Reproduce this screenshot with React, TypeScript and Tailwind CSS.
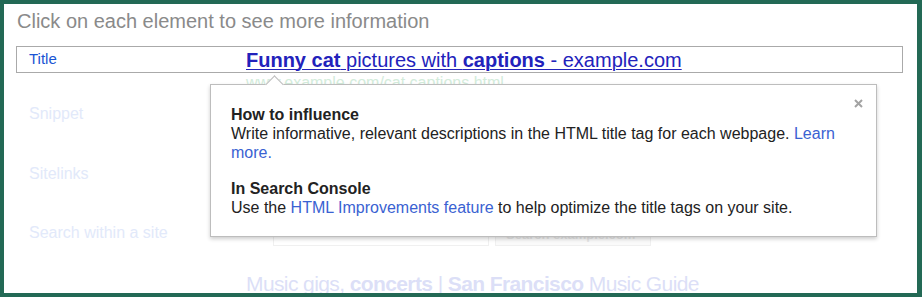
import React from 'react';

const LABELS = [
  { text: 'Snippet', top: 'mt-[31px]' },
  { text: 'Sitelinks', top: 'mt-[41px]' },
  { text: 'Search within a site', top: 'mt-[40px]' },
];

export default function App() {
  return (
    <div
      className="w-[922px] h-[297px] overflow-hidden border-t-4 border-l-4 border-b-4 border-r-[5px] border-[#236955] bg-white"
      style={{ fontFamily: '"Liberation Sans", Arial, sans-serif' }}
    >
      <div className="relative h-full">
        {/* Heading */}
        <div className="pl-[13px] pt-[6px] text-[20px] leading-[23px] text-[#8a8a8a]">
          Click on each element to see more information
        </div>

        {/* Title row */}
        <div className="mt-[13px] ml-[12px] mr-[14px] h-[27px] border border-[#aaaaaa] flex items-center">
          <span className="w-[229px] pl-[12px] text-[15px] text-[#1a55d4]">Title</span>
          <a className="text-[20px] leading-[22px] text-[#2222bb] underline underline-offset-2 decoration-1">
            <b>Funny cat</b> pictures with <b>captions</b> - example.com
          </a>
        </div>

        {/* Faded search result behind the popup */}
        <div className="flex">
          <div className="w-[242px] pl-[25px] flex flex-col text-[16px] leading-[19px] text-[#e2e9fa]">
            {LABELS.map((l) => (
              <span key={l.text} className={l.top}>
                {l.text}
              </span>
            ))}
          </div>
          <div className="flex flex-col">
            <span className="text-[16px] leading-[16px] mt-[2px] text-[#d3ecdb]">www.example.com/cat captions.html</span>
            <div className="mt-[133px] ml-[27px] flex gap-[6px]">
              <div className="w-[216px] h-[22px] border border-[#f0f0f0]" />
              <div className="w-[156px] h-[22px] border border-[#f0f0f0] bg-[#fafafa] text-[13px] leading-[20px] font-bold text-[#e6e6e6] pl-[10px]">
                Search example.com
              </div>
            </div>
            <div className="mt-[27px] text-[21px] leading-[22px] text-[#dcdff7] tracking-[-0.6px]">
              Music gigs, <b>concerts</b> | <b>San Francisco</b> Music Guide
            </div>
          </div>
        </div>

        {/* Popup */}
        <div className="absolute left-[206px] top-[80px] w-[667px] h-[153px] bg-white border border-[#bdbdbd] shadow-[0_2px_4px_rgba(0,0,0,0.2)] pl-[20px] pr-[20px] pt-[20px] text-[16px] leading-[19px] text-[#222222]">
          <div className="absolute left-[57px] top-[-7px] w-[13px] h-[13px] rotate-45 bg-white border-l border-t border-[#bdbdbd]" />
          <svg className="absolute right-[13px] top-[14px]" width="9" height="9" viewBox="0 0 9 9">
            <path d="M1 1 L8 8 M8 1 L1 8" stroke="#a3a3a3" strokeWidth="2" />
          </svg>
          <div className="font-bold">How to influence</div>
          <div className="pr-[4px]">
            Write informative, relevant descriptions in the HTML title tag for each webpage.{' '}
            <a className="text-[#3a62d2]">Learn more.</a>
          </div>
          <div className="mt-[17px] font-bold">In Search Console</div>
          <div>
            Use the <a className="text-[#3a62d2]">HTML Improvements feature</a> to help optimize the title tags on your site.
          </div>
        </div>
      </div>
    </div>
  );
}
